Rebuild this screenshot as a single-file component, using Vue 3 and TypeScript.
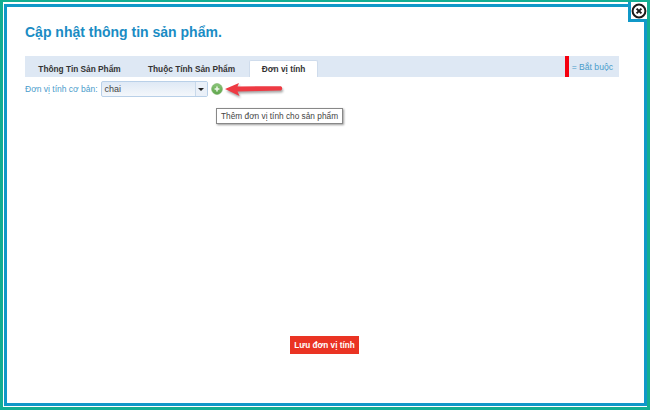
<script setup lang="ts">
const tabs = [
  { label: 'Thông Tin Sản Phẩm', width: 109, active: false },
  { label: 'Thuộc Tính Sản Phẩm', width: 115, active: false },
  { label: 'Đơn vị tính', width: 69, active: true }
]
</script>

<template>
  <div class="frame">
    <div class="dialog">
      <h1 class="title">Cập nhật thông tin sản phẩm.</h1>

      <div class="tabbar">
        <div
          v-for="tab in tabs"
          :key="tab.label"
          class="tab"
          :class="{ active: tab.active }"
          :style="{ width: tab.width + 'px' }"
        >
          {{ tab.label }}
        </div>
        <div class="required">
          <span class="required-mark"></span>
          <span>= Bắt buộc</span>
        </div>
      </div>

      <div class="unit-row">
        <label>Đơn vị tính cơ bản:</label>
        <div class="combo">
          <span class="combo-value">chai</span>
          <span class="combo-trigger"><i></i></span>
        </div>
        <span class="add-btn">
          <svg viewBox="0 0 12 12" width="12" height="12">
            <defs>
              <linearGradient id="addFill" x1="0" y1="0" x2="0" y2="1">
                <stop offset="0" stop-color="#8cc67a" />
                <stop offset="1" stop-color="#5fa64c" />
              </linearGradient>
            </defs>
            <circle cx="6" cy="6" r="5.4" fill="url(#addFill)" stroke="#74ad62" stroke-width="0.6" />
            <path d="M6 3.6v4.8M3.6 6h4.8" stroke="#eef6ea" stroke-width="1.5" />
          </svg>
        </span>

        <svg class="arrow" viewBox="0 0 60 20" width="60" height="20">
          <path d="M0 9L14 3L12.5 6.4L56 6.2Q58.5 8.4 56 10.6L12.5 11.6L14.5 16Z" fill="#ee3a43" />
        </svg>

        <div class="tooltip">Thêm đơn vị tính cho sản phẩm</div>
      </div>

      <div class="spacer"></div>

      <div class="actions">
        <button class="save" type="button">Lưu đơn vị tính</button>
      </div>
    </div>

    <div class="close">
      <svg viewBox="0 0 16 16" width="16" height="16">
        <circle cx="8" cy="8" r="6.4" fill="#fff" stroke="#1a1a1a" stroke-width="2" />
        <path d="M5.6 5.6l4.8 4.8M10.4 5.6l-4.8 4.8" stroke="#1a1a1a" stroke-width="2" />
      </svg>
    </div>
  </div>
</template>

<style>
html, body {
  margin: 0;
  background: #fff;
}
</style>

<style scoped>
.frame {
  position: relative;
  box-sizing: border-box;
  width: 650px;
  height: 410px;
  padding: 2px 0 1px 1px;
  border-style: solid;
  border-color: #13ae92;
  border-width: 2px 3px 3px 3px;
  background: #fff;
  font-family: "Liberation Sans", Arial, sans-serif;
}

.dialog {
  box-sizing: border-box;
  height: 100%;
  padding: 0 25px 49px 18px;
  border: 3px solid #1098c8;
  background: #fff;
  display: flex;
  flex-direction: column;
}

.title {
  margin: 16px 0 15px;
  font-size: 14px;
  line-height: 18px;
  font-weight: bold;
  color: #1a8cc4;
}

.tabbar {
  display: flex;
  align-items: flex-end;
  height: 21px;
  background: #dee8f4;
}

.tab {
  height: 17px;
  line-height: 18px;
  font-size: 8.3px;
  font-weight: bold;
  color: #333;
  text-align: center;
  box-sizing: border-box;
}

.tab.active {
  background: #fff;
  border: 1px solid #cfdcec;
  border-bottom: none;
  border-radius: 2px 2px 0 0;
  line-height: 16px;
}

.required {
  margin-left: auto;
  align-self: stretch;
  display: flex;
  align-items: center;
  font-size: 8.6px;
  color: #4a9ccb;
  padding-right: 6px;
  gap: 3px;
}

.required-mark {
  width: 4px;
  height: 21px;
  background: #f5000f;
}

.unit-row {
  position: relative;
  display: flex;
  align-items: center;
  margin-top: 3px;
  height: 18px;
  font-size: 8.5px;
  color: #4a9ccb;
}

.combo {
  margin-left: 3px;
  width: 107px;
  height: 16px;
  box-sizing: border-box;
  border: 1px solid #b9d0e8;
  border-radius: 2px;
  display: flex;
  background: linear-gradient(#dfe9f5, #f4f7fb);
  color: #444;
  font-size: 9px;
}

.combo-value {
  flex: 1;
  padding-left: 3px;
  line-height: 14px;
}

.combo-trigger {
  width: 11px;
  border-left: 1px solid #c9d9ea;
  display: flex;
  align-items: center;
  justify-content: center;
  background: #eaf0f8;
}

.combo-trigger i {
  width: 0;
  height: 0;
  border-left: 3px solid transparent;
  border-right: 3px solid transparent;
  border-top: 3px solid #222;
}

.add-btn {
  margin-left: 3px;
  height: 12px;
}

.arrow {
  position: absolute;
  left: 200px;
  top: 0;
  filter: drop-shadow(1px 2px 1px rgba(0, 0, 0, 0.35));
}

.tooltip {
  position: absolute;
  left: 191px;
  top: 28px;
  padding: 0 4px;
  height: 14px;
  line-height: 14px;
  white-space: nowrap;
  font-size: 8.3px;
  color: #444;
  background: #fff;
  border: 1px solid #888;
  box-shadow: 1px 1px 2px rgba(0, 0, 0, 0.4);
}

.spacer {
  flex: 1;
}

.actions {
  display: flex;
  justify-content: center;
}

.save {
  width: 69px;
  height: 18px;
  margin-left: 5px;
  padding: 0;
  border: none;
  background: #ea3323;
  color: #fff;
  font-family: inherit;
  font-size: 8.2px;
  font-weight: bold;
}

.close {
  position: absolute;
  top: 0;
  right: 0;
  box-sizing: border-box;
  width: 19px;
  height: 20px;
  background: #fff;
  border-left: 3px solid #1098c8;
  border-bottom: 3px solid #1098c8;
  display: flex;
  align-items: center;
  justify-content: center;
}
</style>
